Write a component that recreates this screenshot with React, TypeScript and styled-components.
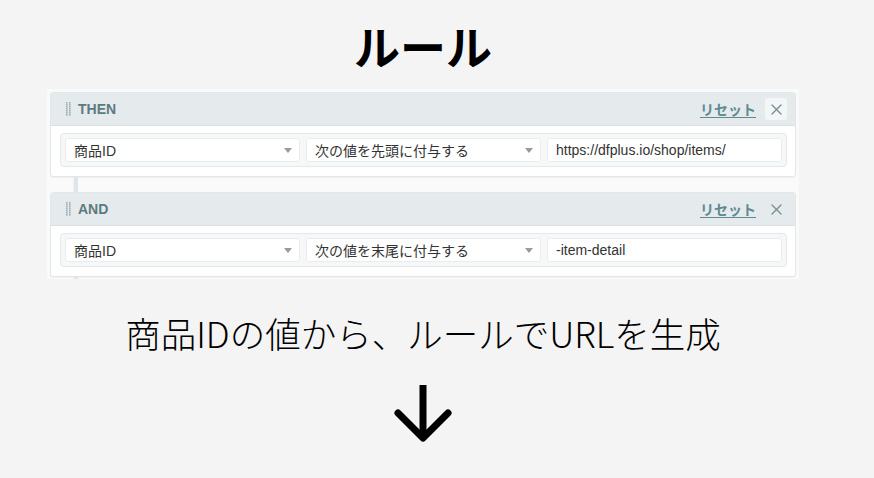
import React from 'react';
import styled, { createGlobalStyle } from 'styled-components';

const GlobalStyle = createGlobalStyle`
  html, body {
    margin: 0;
    padding: 0;
    background: #f4f4f4;
  }
  body {
    font-family: "Noto Sans CJK JP", "Liberation Sans", sans-serif;
    color: #000;
  }
`;

const Page = styled.div`
  width: 846px;
  height: 478px;
  display: flex;
  flex-direction: column;
  align-items: center;
  overflow: hidden;
`;

const Title = styled.h1`
  margin: 22px 0 0;
  font-size: 46px;
  line-height: 46px;
  font-weight: 700;
  font-family: "Noto Sans CJK JP", sans-serif;
`;

const Shot = styled.div`
  margin-top: 21px;
  width: 746px;
  padding: 3px 3px 0 3px;
  background: #fafafa;
  display: flex;
  flex-direction: column;
  font-family: "Liberation Sans", "Noto Sans CJK JP", sans-serif;
`;

const Card = styled.div`
  background: #fff;
  border: 1px solid #e2e7e9;
  border-radius: 3px;
  box-shadow: 0 1px 1px rgba(0, 0, 0, 0.04);
  overflow: hidden;
`;

const CardHeader = styled.div`
  height: 32px;
  background: #e5eaec;
  border-bottom: 1px solid #d9e0e3;
  display: flex;
  align-items: center;
  padding: 0 8px 0 15px;
`;

const Handle = styled.svg`
  width: 5px;
  height: 14px;
  margin-right: 7px;
  flex: none;
`;

const Label = styled.span`
  font-weight: 700;
  font-size: 14px;
  color: #5b7b82;
`;

const Spacer = styled.div`
  flex: 1;
`;

const ResetLink = styled.a`
  font-size: 14px;
  font-weight: 700;
  color: #5f8a93;
  text-decoration: underline;
  text-underline-offset: 2px;
  font-family: "Noto Sans CJK JP", sans-serif;
  margin-right: 9px;
  cursor: pointer;
`;

const CloseButton = styled.button<{ $hover?: boolean }>`
  width: 22px;
  height: 22px;
  border: none;
  border-radius: 3px;
  background: ${p => (p.$hover ? '#f3f6f7' : 'transparent')};
  display: flex;
  align-items: center;
  justify-content: center;
  padding: 0;
  cursor: pointer;
`;

const CardBody = styled.div`
  padding: 7px 8px 9px 9px;
`;

const FieldRow = styled.div`
  display: flex;
  gap: 6px;
  padding: 4px;
  background: #f5f7f8;
  border: 1px solid #e3e8ea;
  border-radius: 4px;
`;

const Select = styled.div`
  flex: 1;
  height: 24px;
  box-sizing: border-box;
  background: #fff;
  border: 1px solid #e9edef;
  border-radius: 3px;
  display: flex;
  align-items: center;
  padding: 0 7px 0 8px;
  font-size: 14px;
  color: #333;
`;

const SelectText = styled.span`
  flex: 1;
  white-space: nowrap;
`;

const Caret = styled.span`
  width: 0;
  height: 0;
  border-left: 4px solid transparent;
  border-right: 4px solid transparent;
  border-top: 5px solid #9a9a9a;
`;

const Connector = styled.div<{ $h: number }>`
  width: 4px;
  height: ${p => p.$h}px;
  margin-left: 23px;
  background: #dfe5e8;
  border-left: 1px solid #eef2f3;
`;

const Caption = styled.p`
  margin: 36px 0 0;
  font-size: 35.5px;
  line-height: 35px;
  font-weight: 300;
  font-family: "Noto Sans CJK JP", sans-serif;
  color: #000;
`;

const Arrow = styled.svg`
  margin-top: 33px;
  width: 60px;
  height: 62px;
`;

const DragDots = () => (
  <Handle viewBox="0 0 5 14">
    {Array.from({ length: 7 }).map((_, r) =>
      [0, 1].map(c => (
        <rect key={`${r}-${c}`} x={c * 3} y={r * 2} width="1.6" height="1.6" fill="#9db0b5" />
      ))
    )}
  </Handle>
);

const XIcon = () => (
  <svg width="11" height="11" viewBox="0 0 11 11">
    <path d="M1 1 L10 10 M10 1 L1 10" stroke="#7b8e94" strokeWidth="1.4" strokeLinecap="round" />
  </svg>
);

type Rule = { label: string; action: string; value: string; hover?: boolean };

const rules: Rule[] = [
  { label: 'THEN', action: '次の値を先頭に付与する', value: 'https://dfplus.io/shop/items/', hover: true },
  { label: 'AND', action: '次の値を末尾に付与する', value: '-item-detail' },
];

const RuleCard: React.FC<{ rule: Rule }> = ({ rule }) => (
  <Card>
    <CardHeader>
      <DragDots />
      <Label>{rule.label}</Label>
      <Spacer />
      <ResetLink>リセット</ResetLink>
      <CloseButton $hover={rule.hover}>
        <XIcon />
      </CloseButton>
    </CardHeader>
    <CardBody>
      <FieldRow>
        <Select>
          <SelectText>商品ID</SelectText>
          <Caret />
        </Select>
        <Select>
          <SelectText>{rule.action}</SelectText>
          <Caret />
        </Select>
        <Select>
          <SelectText>{rule.value}</SelectText>
        </Select>
      </FieldRow>
    </CardBody>
  </Card>
);

const App: React.FC = () => {
  return (
    <>
      <GlobalStyle />
      <Page>
        <Title>ルール</Title>
        <Shot>
          <RuleCard rule={rules[0]} />
          <Connector $h={15} />
          <RuleCard rule={rules[1]} />
          <Connector $h={2} />
        </Shot>
        <Caption>商品IDの値から、ルールでURLを生成</Caption>
        <Arrow viewBox="0 0 60 62">
          <path d="M30 2 L30 55" stroke="#000" strokeWidth="7" fill="none" />
          <path d="M5 30 L30 55 L55 30" stroke="#000" strokeWidth="7" fill="none" strokeLinecap="round" strokeLinejoin="round" />
        </Arrow>
      </Page>
    </>
  );
};

export default App;
